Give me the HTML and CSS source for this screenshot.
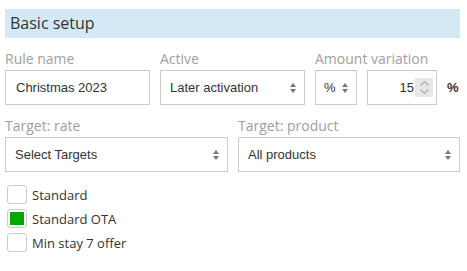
FILE: index.html
```html
<!DOCTYPE html>
<html lang="en">
<head>
    <meta charset="UTF-8">
    <title>Basic setup</title>
    <link rel="stylesheet" href="styles.css">
</head>
<body>
    <div class="panel">
        <h2 class="section-title">Basic setup</h2>

        <div class="row row-top">
            <div class="field">
                <label class="field-label">Rule name</label>
                <div class="control text-input">Christmas 2023</div>
            </div>
            <div class="field">
                <label class="field-label">Active</label>
                <div class="control select">
                    <span>Later activation</span>
                    <svg class="arrows" width="6" height="10" viewBox="0 0 6 10"><path d="M3 0L6 4H0z M3 10L6 6H0z" fill="#777"/></svg>
                </div>
            </div>
            <div class="field">
                <label class="field-label">Amount variation</label>
                <div class="amount">
                    <div class="control select select-unit">
                        <span>%</span>
                        <svg class="arrows" width="6" height="10" viewBox="0 0 6 10"><path d="M3 0L6 4H0z M3 10L6 6H0z" fill="#777"/></svg>
                    </div>
                    <div class="control number-input">
                        <span>15</span>
                        <span class="spinner">
                            <svg width="11" height="15" viewBox="0 0 11 15"><path d="M1.5 5.5L5.5 1.5L9.5 5.5 M1.5 9.5L5.5 13.5L9.5 9.5" fill="none" stroke="#aaa" stroke-width="1.2"/></svg>
                        </span>
                    </div>
                    <span class="unit">%</span>
                </div>
            </div>
        </div>

        <div class="row row-targets">
            <div class="field">
                <label class="field-label">Target: rate</label>
                <div class="control select">
                    <span>Select Targets</span>
                    <svg class="arrows" width="6" height="10" viewBox="0 0 6 10"><path d="M3 0L6 4H0z M3 10L6 6H0z" fill="#777"/></svg>
                </div>
            </div>
            <div class="field">
                <label class="field-label">Target: product</label>
                <div class="control select">
                    <span>All products</span>
                    <svg class="arrows" width="6" height="10" viewBox="0 0 6 10"><path d="M3 0L6 4H0z M3 10L6 6H0z" fill="#777"/></svg>
                </div>
            </div>
        </div>

        <ul class="rate-list">
            <li><span class="check"></span>Standard</li>
            <li><span class="check checked"></span>Standard OTA</li>
            <li><span class="check"></span>Min stay 7 offer</li>
        </ul>
    </div>
</body>
</html>
```

FILE: styles.css
```css
body {
    margin: 0;
    background: #fff;
    font-family: "Open Sans", sans-serif;
    color: #333;
}
.panel {
    padding: 9px 7px 0 5px;
}
.section-title {
    margin: 0;
    height: 29px;
    line-height: 29px;
    padding-left: 5px;
    background-color: #d5e8f6;
    font-size: 16px;
    font-weight: normal;
    color: #333;
}
.row {
    display: grid;
    column-gap: 10px;
}
.row-top {
    grid-template-columns: 145px 145px auto;
    margin-top: 12px;
}
.row-targets {
    grid-template-columns: 223px 222px;
    margin-top: 12px;
}
.field-label {
    display: block;
    height: 18px;
    line-height: 18px;
    margin-bottom: 2px;
    font-size: 14px;
    color: #a0a0a0;
}
.control {
    box-sizing: border-box;
    height: 35px;
    border: 1px solid #ccc;
    font-family: "Liberation Sans", Arial, sans-serif;
    font-size: 13px;
    color: #333;
    display: flex;
    align-items: center;
}
.text-input {
    padding: 0 10px;
}
.select {
    justify-content: space-between;
    padding: 0 8px 0 9px;
}
.select-unit {
    width: 42px;
    padding-left: 8px;
}
.amount {
    display: flex;
    align-items: center;
    gap: 10px;
}
.number-input {
    width: 70px;
    justify-content: flex-end;
    padding-right: 3px;
}
.spinner {
    display: flex;
    align-items: center;
    justify-content: center;
    width: 18px;
    height: 19px;
    margin-left: 1px;
    background-color: #e8e8e8;
}
.unit {
    font-family: "Liberation Sans", Arial, sans-serif;
    font-size: 13px;
    font-weight: bold;
    color: #333;
}
.rate-list {
    list-style: none;
    margin: 13px 0 0 2px;
    padding: 0;
}
.rate-list li {
    display: flex;
    align-items: center;
    height: 19px;
    margin-bottom: 5px;
    font-size: 13px;
    color: #333;
}
.check {
    box-sizing: border-box;
    width: 20px;
    height: 19px;
    margin-right: 5px;
    border: 1px solid #ccc;
    border-radius: 3px;
    background: #fff;
}
.check.checked {
    padding: 2px;
    background-clip: content-box;
    background-color: #00a800;
}
```
